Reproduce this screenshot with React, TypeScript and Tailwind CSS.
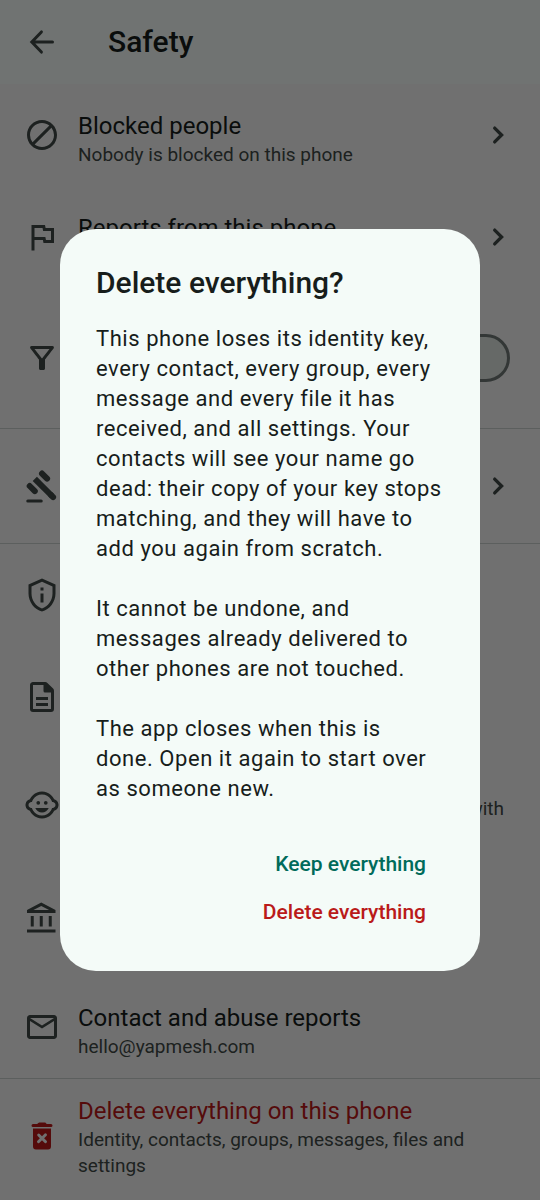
import type { ReactNode } from 'react';
import {
  MdBlock,
  MdOutlineAccountBalance,
  MdOutlineChildCare,
  MdOutlineFilterAlt,
  MdOutlineFlag,
  MdOutlineMail,
  MdOutlinePrivacyTip,
} from 'react-icons/md';

const ArrowIcon = () => (
  <svg viewBox="0 0 24 24" className="size-9" fill="none" stroke="currentColor" strokeWidth="2" strokeLinecap="round">
    <path d="M19 12H5.6M11.6 5.3 5.2 12l6.4 6.700" />
  </svg>
);

const ChevronIcon = () => (
  <svg viewBox="0 0 24 24" className="size-9 shrink-0 text-[#3f4946]" fill="none" stroke="currentColor" strokeWidth="2.2" strokeLinecap="round">
    <path d="m9.800 7.400 4.600 4.600-4.600 4.600" />
  </svg>
);

const GavelIcon = () => (
  <svg viewBox="0 0 24 24" className="size-9" fill="none" stroke="currentColor" strokeLinecap="round">
    <path d="M2.500 22h9" strokeWidth="2" />
    <path d="M7.200 7.200 18.500 18.500" strokeWidth="4" strokeLinecap="butt" />
    <path d="m18.200 18.200 1.200 1.200" strokeWidth="4" />
    <path d="m12 3.700 3.400 3.400M3.800 12l3.400 3.400" strokeWidth="4" />
  </svg>
);

const DocumentIcon = () => (
  <svg viewBox="0 0 24 24" className="size-9" fill="currentColor">
    <path
      fillRule="evenodd"
      d="M6 2h8.200c.5 0 1 .2 1.400.6l3.800 3.800c.4.4.6.9.6 1.400V20a2 2 0 0 1-2 2H6a2 2 0 0 1-2-2V4c0-1.100.900-2 2-2Zm0 2v16h12V9h-4a1 1 0 0 1-1-1V4H6Z"
    />
    <path d="M8 12h8v2H8zM8 16h8v2H8z" />
  </svg>
);

const TrashIcon = () => (
  <svg viewBox="0 0 24 24" className="size-9" fill="currentColor">
    <path d="M9.500 3.300A1 1 0 0 1 10.200 3h3.600c.300 0 .500.100.700.300l.700.700H18a1 1 0 1 1 0 2H6a1 1 0 1 1 0-2h2.800Z" />
    <path
      fillRule="evenodd"
      d="M6 7h12v12a2 2 0 0 1-2 2H8a2 2 0 0 1-2-2Zm3.100 3.600a1 1 0 0 0 0 1.400l1.500 1.500-1.500 1.500a1 1 0 1 0 1.400 1.400l1.500-1.500 1.500 1.500a1 1 0 1 0 1.400-1.400l-1.500-1.500 1.500-1.500a1 1 0 1 0-1.400-1.400L12 12.100l-1.500-1.500a1 1 0 0 0-1.400 0Z"
    />
  </svg>
);

const rowHeights = {
  sm: 'min-h-[102px]',
  md: 'min-h-[114px]',
  lg: 'min-h-[140px]',
};

interface RowProps {
  icon: ReactNode;
  title?: string;
  children?: ReactNode;
  trailing?: ReactNode;
  danger?: boolean;
  size?: keyof typeof rowHeights;
}

function Row({ icon, title, children, trailing, danger, size = 'sm' }: RowProps) {
  return (
    <li
      className={`flex items-center gap-[18px] px-6 ${rowHeights[size]} ${danger ? 'text-[#ba1a1a]' : 'text-[#3f4946]'}`}
    >
      <span className="shrink-0">{icon}</span>
      <div className={`min-w-0 flex-1 ${size === 'sm' ? 'pt-2' : 'pt-0.5'}`}>
        <p className={`min-h-8 text-2xl leading-8 ${danger ? '' : 'text-[#171d1b]'}`}>{title}</p>
        <div className="min-h-[26px] text-[19px] leading-[26px] text-[#3f4946]">{children}</div>
      </div>
      {trailing}
    </li>
  );
}

function SafetyPage() {
  return (
    <main className="min-h-screen bg-[#f5f5f5]">
      <header className="flex h-21 items-center gap-12 bg-[#f4fbf8] px-6 text-[#171d1b]">
        <button aria-label="Back" className="text-[#3f4946]">
          <ArrowIcon />
        </button>
        <h1 className="text-[30px] leading-9 font-medium">Safety</h1>
      </header>
      <ul>
        <Row icon={<MdBlock className="size-9" />} title="Blocked people" trailing={<ChevronIcon />}>
          Nobody is blocked on this phone
        </Row>
        <Row icon={<MdOutlineFlag className="size-9" />} title="Reports from this phone" trailing={<ChevronIcon />} />
        <Row
          icon={<MdOutlineFilterAlt className="size-9" />}
          size="lg"
          trailing={
            <input
              type="checkbox"
              role="switch"
              aria-label="Filter"
              className="mr-1.5 h-12 w-[78px] shrink-0 appearance-none rounded-full border-3 border-[#6f7976] bg-[#dee4e1]"
            />
          }
        />
      </ul>
      <ul className="border-y border-[#c8cfcc]">
        <Row icon={<GavelIcon />} size="md" trailing={<ChevronIcon />} />
      </ul>
      <ul>
        <Row icon={<MdOutlinePrivacyTip className="size-9" />} />
        <Row icon={<DocumentIcon />} />
        <Row icon={<MdOutlineChildCare className="size-9" />} size="md">
          <p className="min-h-[52px] pr-3 text-right">with</p>
        </Row>
        <Row icon={<MdOutlineAccountBalance className="size-9" />} size="md" />
        <Row icon={<MdOutlineMail className="size-9" />} title="Contact and abuse reports">
          hello@yapmesh.com
        </Row>
      </ul>
      <ul className="border-t border-[#c8cfcc]">
        <Row icon={<TrashIcon />} title="Delete everything on this phone" size="md" danger>
          Identity, contacts, groups, messages, files and settings
        </Row>
      </ul>
    </main>
  );
}

function DeleteDialog() {
  return (
    <div className="fixed inset-0 flex items-center justify-center bg-black/54 px-15">
      <div
        role="dialog"
        aria-modal="true"
        aria-labelledby="delete-title"
        className="w-full max-w-[840px] rounded-[36px] bg-[#f4fbf8] px-9 pt-9 pb-[34px] text-[#171d1b]"
      >
        <h2 id="delete-title" className="text-[30px] leading-9 font-medium">
          Delete everything?
        </h2>
        <div className="mt-[23px] flex flex-col gap-[30px] text-[22px] leading-[30px] tracking-wide">
          <p>
            This phone loses its identity key, every contact, every group, every message and every file it has
            received, and all settings. Your contacts will see your name go dead: their copy of your key stops
            matching, and they will have to add you again from scratch.
          </p>
          <p>It cannot be undone, and messages already delivered to other phones are not touched.</p>
          <p>The app closes when this is done. Open it again to start over as someone new.</p>
        </div>
        <div className="mt-[37px] flex flex-col items-end text-[21px] font-medium">
          <button className="h-12 px-[18px] text-[#006b5b]">Keep everything</button>
          <button className="h-12 px-[18px] text-[#ba1a1a]">Delete everything</button>
        </div>
      </div>
    </div>
  );
}

export default function App() {
  return (
    <div className="h-screen overflow-hidden font-['Roboto',sans-serif]">
      <SafetyPage />
      <DeleteDialog />
    </div>
  );
}
